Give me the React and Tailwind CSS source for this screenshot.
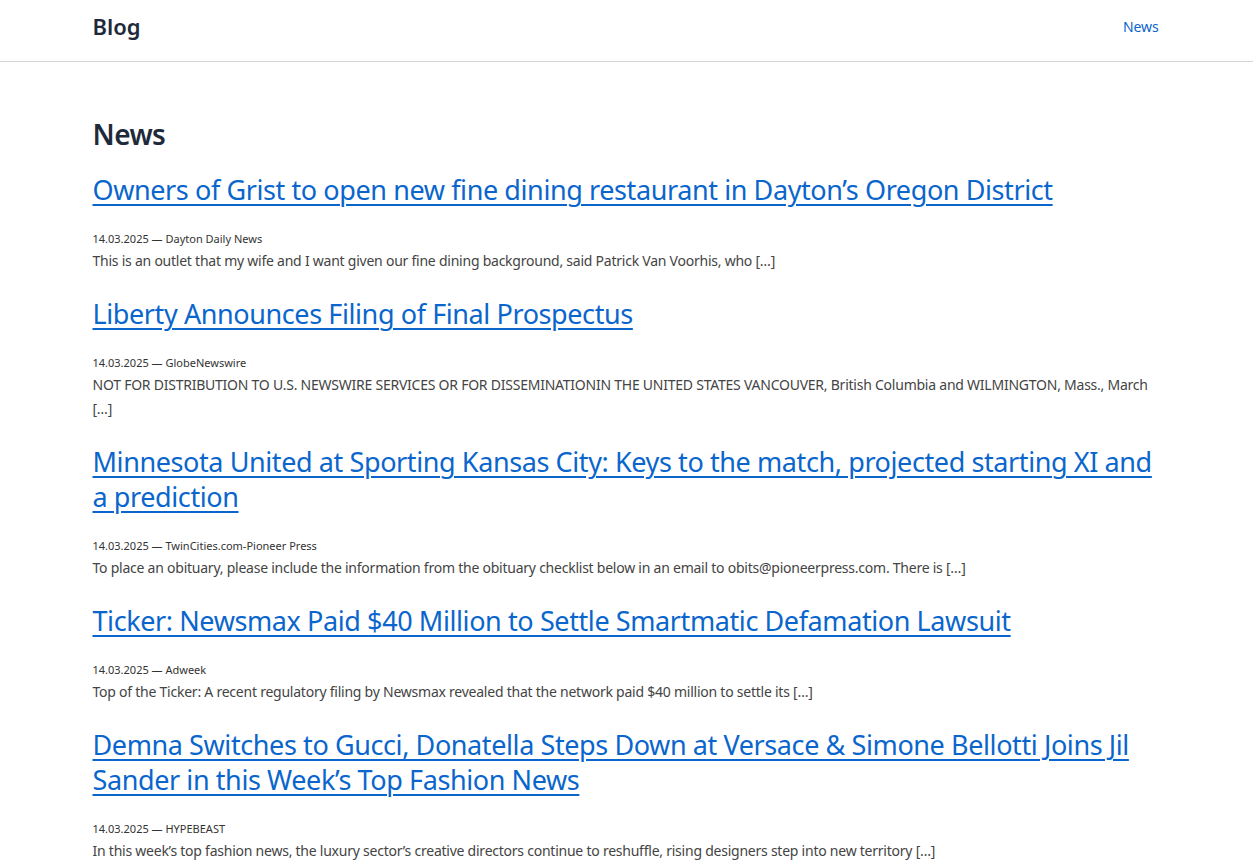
const posts = [
  {
    title: 'Owners of Grist to open new fine dining restaurant in Dayton’s Oregon District',
    source: 'Dayton Daily News',
    excerpt: 'This is an outlet that my wife and I want given our fine dining background, said Patrick Van Voorhis, who […]',
  },
  {
    title: 'Liberty Announces Filing of Final Prospectus',
    source: 'GlobeNewswire',
    excerpt:
      'NOT FOR DISTRIBUTION TO U.S. NEWSWIRE SERVICES OR FOR DISSEMINATIONIN THE UNITED STATES VANCOUVER, British Columbia and WILMINGTON, Mass., March […]',
  },
  {
    title: 'Minnesota United at Sporting Kansas City: Keys to the match, projected starting XI and a prediction',
    source: 'TwinCities.com-Pioneer Press',
    excerpt:
      'To place an obituary, please include the information from the obituary checklist below in an email to obits@pioneerpress.com. There is […]',
  },
  {
    title: 'Ticker: Newsmax Paid $40 Million to Settle Smartmatic Defamation Lawsuit',
    source: 'Adweek',
    excerpt: 'Top of the Ticker: A recent regulatory filing by Newsmax revealed that the network paid $40 million to settle its […]',
  },
  {
    title: 'Demna Switches to Gucci, Donatella Steps Down at Versace & Simone Bellotti Joins Jil Sander in this Week’s Top Fashion News',
    source: 'HYPEBEAST',
    excerpt:
      'In this week’s top fashion news, the luxury sector’s creative directors continue to reshuffle, rising designers step into new territory […]',
  },
];

function Post({ post }) {
  return (
    <article className="mb-[23px]">
      <h2 className="text-[27px] leading-[35px] font-normal tracking-[-0.015em]">
        <a href="#" className="text-[#0a66cc] underline decoration-[2px] underline-offset-[4px]">
          {post.title}
        </a>
      </h2>
      <div className="mt-[23px] text-[11px] leading-[18px] text-[#333]">
        14.03.2025 — {post.source}
      </div>
      <p className="mt-[1px] text-[14px] leading-[24px] tracking-[-0.017em] text-[#444]">{post.excerpt}</p>
    </article>
  );
}

export default function App() {
  return (
    <div className="min-h-screen bg-white font-['Noto_Sans',sans-serif] text-[#1e2a3a]">
      <header className="border-b border-[#d6d6d6] pb-[9px]">
        <div className="mx-auto max-w-[1100px] px-4 h-[52px] flex items-center justify-between">
          <span className="text-[22px] font-semibold text-[#1e2a3a]">Blog</span>
          <a href="#" className="text-[14px] text-[#0a66cc] tracking-[-0.01em] mr-[2px]">News</a>
        </div>
      </header>
      <main className="mx-auto max-w-[1100px] px-4 pt-[54px]">
        <h1 className="text-[28px] leading-[36px] font-semibold tracking-[-0.02em] text-[#1e2a3a] mb-[20px]">News</h1>
        {posts.map((p) => (
          <Post key={p.source} post={p} />
        ))}
      </main>
    </div>
  );
}
